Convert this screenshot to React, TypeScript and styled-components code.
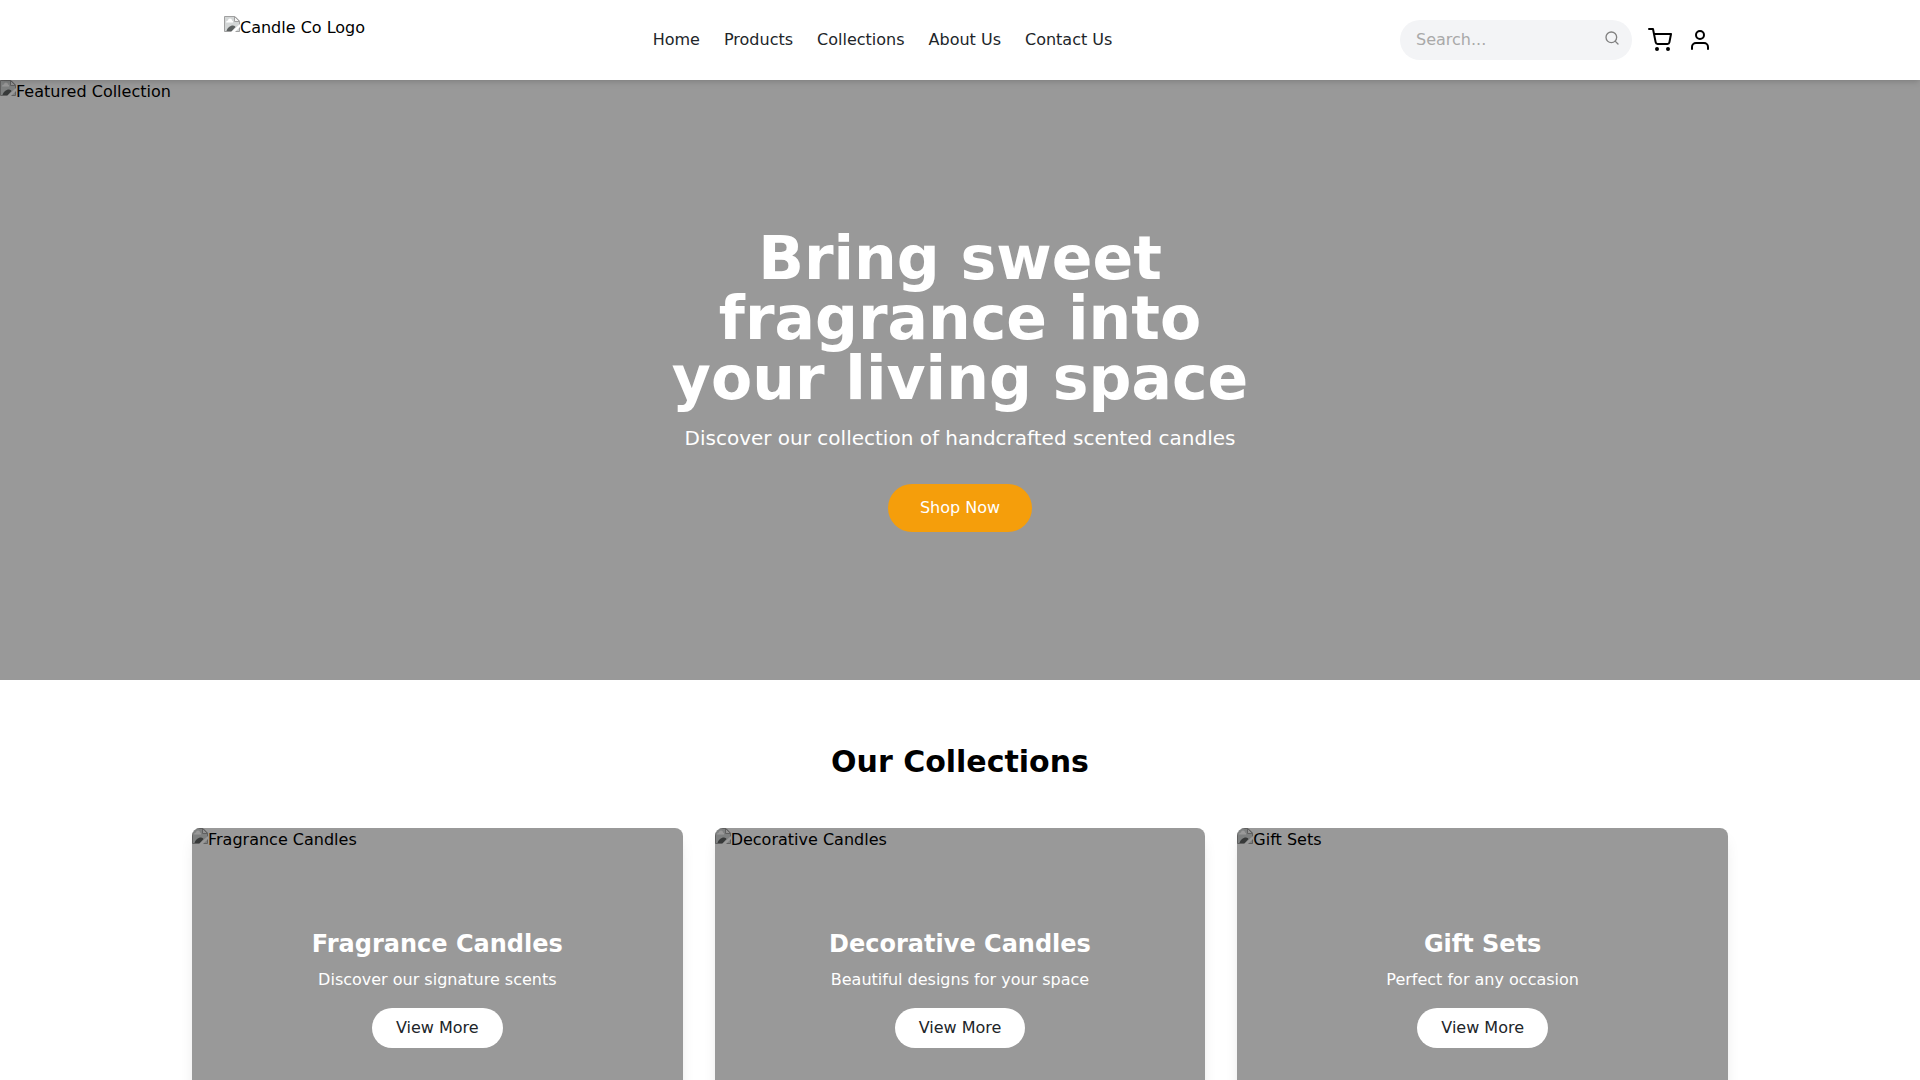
import React from "react";
import styled, { createGlobalStyle } from "styled-components";
import { FiSearch, FiShoppingCart, FiUser } from "react-icons/fi";

const GlobalStyle = createGlobalStyle`
  *, *::before, *::after { box-sizing: border-box; }
  body {
    margin: 0;
    background: #fff;
    color: #000;
    font-family: "DejaVu Sans", sans-serif;
    font-size: 16px;
    line-height: 24px;
  }
  h1, h2, h3, p, ul { margin: 0; padding: 0; }
  button, input { font: inherit; border: 0; }
  button { cursor: pointer; }
  a { color: inherit; text-decoration: none; }
`;

const Header = styled.header`
  position: relative;
  z-index: 1;
  background: #fff;
  box-shadow: 0 4px 6px -1px rgba(0, 0, 0, 0.1), 0 2px 4px -2px rgba(0, 0, 0, 0.1);
`;

const HeaderInner = styled.div`
  max-width: 1536px;
  min-height: 80px;
  margin: 0 auto;
  padding: 16px;
  display: flex;
  align-items: center;
  justify-content: space-between;
`;

const LogoLink = styled.a`
  height: 48px;
  padding-left: 16px;
`;

const Nav = styled.nav`
  display: flex;
  gap: 24px;
  color: #212529;
`;

const Actions = styled.div`
  display: flex;
  align-items: center;
  gap: 16px;
`;

const SearchForm = styled.form`
  display: flex;
  align-items: center;
  width: 232px;
  height: 40px;
  padding: 0 12px 0 16px;
  gap: 8px;
  border-radius: 20px;
  background: #f3f4f6;
`;

const SearchInput = styled.input`
  flex: 1;
  min-width: 0;
  padding: 0;
  background: transparent;
  outline: none;
  &::placeholder { color: #a9a9a9; opacity: 1; }
`;

const IconButton = styled.button<{ $color?: string }>`
  display: flex;
  padding: 0;
  background: none;
  color: ${(p) => p.$color ?? "#000"};
`;

const SearchButton = styled(IconButton)`
  padding-bottom: 4px;
`;

const MissingPicture = styled.span`
  display: flex;
  align-items: flex-start;
  svg { flex: none; }
`;

const Overlay = styled.div`
  grid-area: 1 / 1;
  display: flex;
  flex-direction: column;
  align-items: center;
  justify-content: center;
  padding: 16px;
  text-align: center;
  color: #fff;
  background: rgba(0, 0, 0, 0.4);
`;

const Picture = styled.div`
  grid-area: 1 / 1;
`;

const Hero = styled.section`
  display: grid;
  min-height: 600px;
`;

const HeroTitle = styled.h1`
  max-width: 640px;
  margin-bottom: 16px;
  font-size: 60px;
  line-height: 60px;
`;

const HeroText = styled.p`
  margin-bottom: 32px;
  font-size: 20px;
  line-height: 28px;
`;

const PillButton = styled.button<{ $primary?: boolean }>`
  padding: ${(p) => (p.$primary ? "12px 32px" : "8px 24px")};
  border-radius: 24px;
  background: ${(p) => (p.$primary ? "#f59e0b" : "#fff")};
  color: ${(p) => (p.$primary ? "#fff" : "#212529")};
`;

const Section = styled.section`
  max-width: 1536px;
  margin: 0 auto;
  padding: 64px 0;
`;

const SectionTitle = styled.h2`
  margin-bottom: 48px;
  font-size: 30px;
  line-height: 36px;
  text-align: center;
`;

const Cards = styled.div`
  display: grid;
  grid-template-columns: repeat(3, 1fr);
  gap: 32px;
`;

const Card = styled.article`
  display: grid;
  min-height: 320px;
  border-radius: 8px;
  overflow: hidden;
  box-shadow: 0 10px 15px -3px rgba(0, 0, 0, 0.1), 0 4px 6px -4px rgba(0, 0, 0, 0.1);
`;

const CardTitle = styled.h3`
  margin-bottom: 8px;
  font-size: 24px;
  line-height: 32px;
`;

const CardText = styled.p`
  margin-bottom: 16px;
`;

function Missing({ label }: { label: string }) {
  return (
    <MissingPicture>
      <svg width="16" height="16" viewBox="0 0 16 16" aria-hidden="true">
        <path d="M0.5 0.5H11L15.5 5V15.500H0.5Z" fill="#d3d6d6" stroke="#a0a0a0" />
        <path d="M10.500 0.500V5.500H15.500Z" fill="#f4f4f4" stroke="#a0a0a0" />
        <path d="M2 6.500a2 2 0 0 1 2-2 2 2 0 0 1 4 0 1.500 1.500 0 0 1 1 2Z" fill="#fff" />
        <path d="M2.500 15C3 12 6 9.500 9 9.500Q11 9.500 11.500 11L8 15Z" fill="#5c6060" />
        <path d="M16 8V11L11 16H7Z" fill="#fff" />
      </svg>
      {label}
    </MissingPicture>
  );
}

const links = ["Home", "Products", "Collections", "About Us", "Contact Us"];

const collections = [
  { title: "Fragrance Candles", text: "Discover our signature scents" },
  { title: "Decorative Candles", text: "Beautiful designs for your space" },
  { title: "Gift Sets", text: "Perfect for any occasion" },
];

export default function App() {
  return (
    <>
      <GlobalStyle />
      <Header>
        <HeaderInner>
          <LogoLink href="#home">
            <Missing label="Candle Co Logo" />
          </LogoLink>
          <Nav>
            {links.map((link) => (
              <a key={link} href={"#" + link.toLowerCase().replace(" ", "-")}>
                {link}
              </a>
            ))}
          </Nav>
          <Actions>
            <SearchForm role="search">
              <SearchInput type="text" placeholder="Search..." aria-label="Search" />
              <SearchButton type="button" aria-label="Submit search" $color="#808080">
                <FiSearch size={16} />
              </SearchButton>
            </SearchForm>
            <IconButton type="button" aria-label="Cart">
              <FiShoppingCart size={24} />
            </IconButton>
            <IconButton type="button" aria-label="Account">
              <FiUser size={24} />
            </IconButton>
          </Actions>
        </HeaderInner>
      </Header>
      <main>
        <Hero>
          <Picture>
            <Missing label="Featured Collection" />
          </Picture>
          <Overlay>
            <HeroTitle>Bring sweet fragrance into your living space</HeroTitle>
            <HeroText>Discover our collection of handcrafted scented candles</HeroText>
            <PillButton type="button" $primary>
              Shop Now
            </PillButton>
          </Overlay>
        </Hero>
        <Section>
          <SectionTitle>Our Collections</SectionTitle>
          <Cards>
            {collections.map((item) => (
              <Card key={item.title}>
                <Picture>
                  <Missing label={item.title} />
                </Picture>
                <Overlay>
                  <CardTitle>{item.title}</CardTitle>
                  <CardText>{item.text}</CardText>
                  <PillButton type="button">View More</PillButton>
                </Overlay>
              </Card>
            ))}
          </Cards>
        </Section>
      </main>
    </>
  );
}
